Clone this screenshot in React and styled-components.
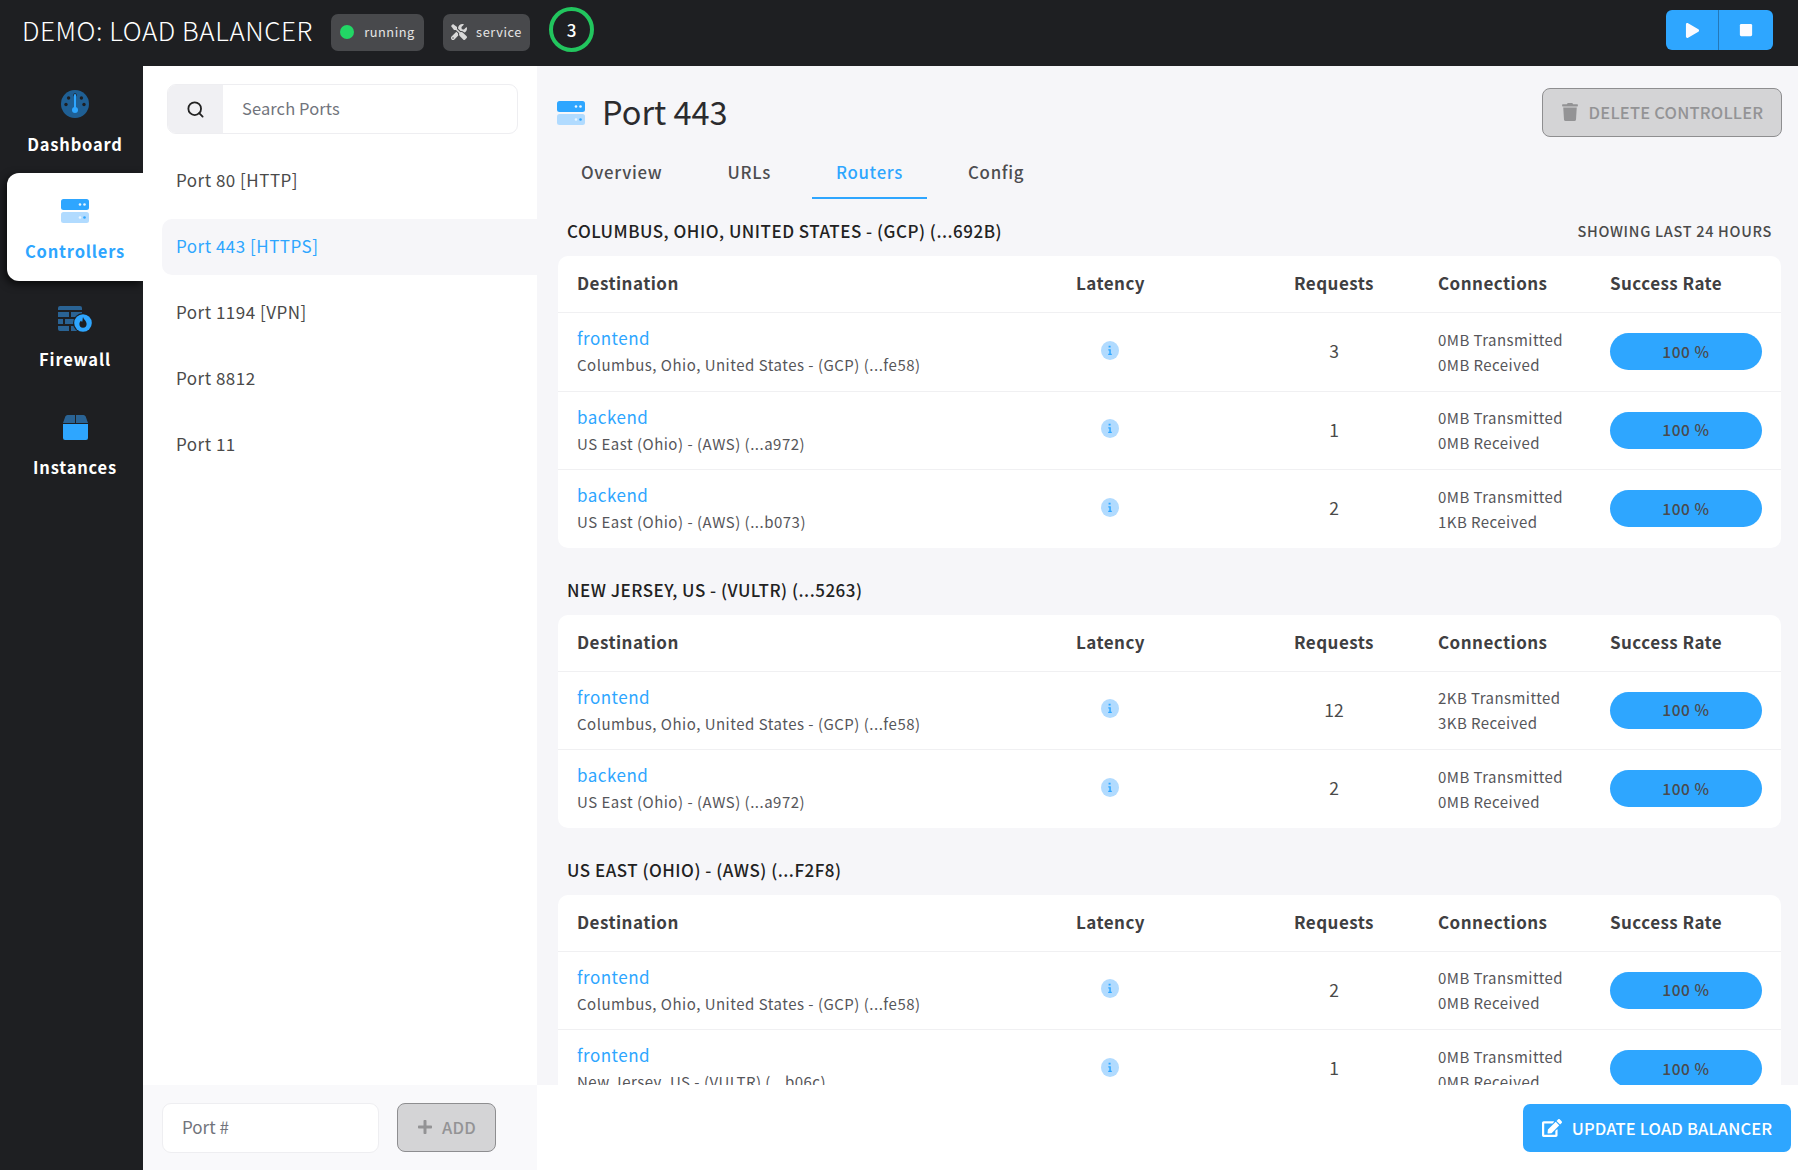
import React from "react";
import styled, { createGlobalStyle } from "styled-components";
import { FaEdit, FaPlay, FaPlus, FaStop, FaTools, FaTrash } from "react-icons/fa";
import { Search } from "lucide-react";

const BLUE = "#2ea6ff";
const DARK = "#1e1f22";

const GlobalStyle = createGlobalStyle`
  html, body, #root { margin: 0; height: 100%; }
  body {
    font-family: "Noto Sans CJK SC", "Noto Sans", sans-serif;
    color: #333;
    overflow: hidden;
  }
  * { box-sizing: border-box; }
`;

const ServerIcon = ({ size = 28 }) => (
  <svg width={size} height={(size * 24) / 28} viewBox="0 0 28 24">
    <rect x="0" y="0" width="28" height="11" rx="2.5" fill={BLUE} />
    <rect x="0" y="13" width="28" height="11" rx="2.5" fill="#b1dbff" />
    <circle cx="19" cy="5.5" r="1.3" fill="#eaf6ff" />
    <circle cx="23.5" cy="5.5" r="1.3" fill="#eaf6ff" />
    <circle cx="19" cy="18.5" r="1.3" fill="#eaf6ff" />
    <circle cx="23.5" cy="18.5" r="1.3" fill={BLUE} />
  </svg>
);

const DashboardIcon = () => (
  <svg width="28" height="28" viewBox="0 0 28 28">
    <circle cx="14" cy="14" r="14" fill="#1f5f94" />
    <circle cx="14" cy="5" r="1.7" fill={DARK} />
    <circle cx="7.6" cy="8" r="1.7" fill={DARK} />
    <circle cx="20.4" cy="8" r="1.7" fill={DARK} />
    <circle cx="5" cy="14.5" r="1.7" fill={DARK} />
    <circle cx="23" cy="14.5" r="1.7" fill={DARK} />
    <rect x="13" y="4" width="2" height="17" rx="1" fill={BLUE} />
    <circle cx="14" cy="20" r="3" fill={BLUE} />
  </svg>
);

const FirewallIcon = () => (
  <svg width="34" height="27" viewBox="0 0 34 27">
    <path
      d="M2 0h20a2 2 0 0 1 2 2v2H0V2a2 2 0 0 1 2-2ZM0 6h11v5H0ZM13 6h11v5H13ZM0 13h5v5H0ZM7 13h11v5H7ZM0 20h11v5H2a2 2 0 0 1-2-2ZM13 20h6v5h-6Z"
      fill="#2a6394"
    />
    <circle cx="25" cy="17" r="10" fill={DARK} />
    <circle cx="25" cy="17" r="8.800" fill={BLUE} />
    <path
      d="M25 11c.6 2.400 3.600 3.800 3.600 7.100a3.600 3.600 0 0 1-7.200 0c0-1.700.8-2.800 1.700-3.700.3 1 .8 1.300 1.100 1.300.6-1.400.3-3.300.8-4.700Z"
      fill={DARK}
    />
  </svg>
);

const BoxIcon = () => (
  <svg width="25" height="25" viewBox="0 0 25 25">
    <path d="M4.500 0H12v8H0l2.300-6.500A2.400 2.400 0 0 1 4.500 0ZM13 0h7.500a2.400 2.400 0 0 1 2.200 1.500L25 8H13Z" fill="#2a6394" />
    <path d="M0 9h25v14a2 2 0 0 1-2 2H2a2 2 0 0 1-2-2Z" fill={BLUE} />
  </svg>
);

const InfoIcon = () => (
  <svg width="18" height="19" viewBox="0 0 18 19">
    <ellipse cx="9" cy="9.500" rx="9" ry="9.500" fill="#b1dbff" />
    <path d="M7.600 4.800h2v1.800h-2ZM7.300 8.200h2.500v4.500h1v1.200H7.200v-1.200h1.100V9.400h-1Z" fill={BLUE} />
  </svg>
);

const NAV = [
  { label: "Dashboard", icon: <DashboardIcon /> },
  { label: "Controllers", icon: <ServerIcon />, active: true },
  { label: "Firewall", icon: <FirewallIcon /> },
  { label: "Instances", icon: <BoxIcon /> },
];

const PORTS = ["Port 80 [HTTP]", "Port 443 [HTTPS]", "Port 1194 [VPN]", "Port 8812", "Port 11"];
const TABS = ["Overview", "URLs", "Routers", "Config"];

const COLUMBUS = "Columbus, Ohio, United States - (GCP) (...fe58)";

const GROUPS = [
  {
    title: "COLUMBUS, OHIO, UNITED STATES - (GCP) (...692B)",
    note: "SHOWING LAST 24 HOURS",
    rows: [
      { name: "frontend", place: COLUMBUS, requests: 3, sent: "0MB", received: "0MB" },
      { name: "backend", place: "US East (Ohio) - (AWS) (...a972)", requests: 1, sent: "0MB", received: "0MB" },
      { name: "backend", place: "US East (Ohio) - (AWS) (...b073)", requests: 2, sent: "0MB", received: "1KB" },
    ],
  },
  {
    title: "NEW JERSEY, US - (VULTR) (...5263)",
    rows: [
      { name: "frontend", place: COLUMBUS, requests: 12, sent: "2KB", received: "3KB" },
      { name: "backend", place: "US East (Ohio) - (AWS) (...a972)", requests: 2, sent: "0MB", received: "0MB" },
    ],
  },
  {
    title: "US EAST (OHIO) - (AWS) (...F2F8)",
    rows: [
      { name: "frontend", place: COLUMBUS, requests: 2, sent: "0MB", received: "0MB" },
      { name: "frontend", place: "New Jersey, US - (VULTR) (...b06c)", requests: 1, sent: "0MB", received: "0MB" },
    ],
  },
];

export default function App() {
  return (
    <>
      <GlobalStyle />
      <Page>
        <Header>
          <Title>DEMO: LOAD BALANCER</Title>
          <Badge $width={93} $gap={10}>
            <StatusDot />
            running
          </Badge>
          <Badge $width={87} $gap={9}>
            <FaTools size={16} color="#d9d9d9" />
            service
          </Badge>
          <CountRing>3</CountRing>
          <PlayGroup>
            <PlayButton $width={52}><FaPlay size={15} /></PlayButton>
            <PlayButton $width={55}><FaStop size={14} /></PlayButton>
          </PlayGroup>
        </Header>

        <Body>
          <Sidebar>
            {NAV.map((item) => (
              <NavItem key={item.label} $active={item.active}>
                <NavIcon>{item.icon}</NavIcon>
                {item.label}
              </NavItem>
            ))}
          </Sidebar>

          <PortPanel>
            <SearchBox>
              <SearchAddon><Search size={19} strokeWidth={2.3} color="#222" /></SearchAddon>
              <SearchText>Search Ports</SearchText>
            </SearchBox>
            <PortList>
              {PORTS.map((port) => (
                <PortItem key={port} $active={port.includes("443")}>{port}</PortItem>
              ))}
            </PortList>
            <PortFooter>
              <PortInput>Port #</PortInput>
              <AddButton><FaPlus size={16} /> ADD</AddButton>
            </PortFooter>
          </PortPanel>

          <Main>
            <MainHead>
              <PageTitle>
                <ServerIcon />
                <span>Port 443</span>
              </PageTitle>
              <DeleteButton><FaTrash size={18} /> DELETE CONTROLLER</DeleteButton>
            </MainHead>
            <Tabs>
              {TABS.map((tab) => (
                <Tab key={tab} $active={tab === "Routers"}>{tab}</Tab>
              ))}
            </Tabs>
            <Content>
              {GROUPS.map((group) => (
                <Group key={group.title}>
                  <GroupHead>
                    <GroupTitle>{group.title}</GroupTitle>
                    {group.note && <GroupNote>{group.note}</GroupNote>}
                  </GroupHead>
                  <Card>
                    <HeadRow>
                      <span>Destination</span>
                      <span>Latency</span>
                      <Centered>Requests</Centered>
                      <span>Connections</span>
                      <span>Success Rate</span>
                    </HeadRow>
                    {group.rows.map((row) => (
                      <Row key={row.place + row.requests}>
                        <div>
                          <RowName>{row.name}</RowName>
                          <RowPlace>{row.place}</RowPlace>
                        </div>
                        <LatencyCell><InfoIcon /></LatencyCell>
                        <RequestCell>{row.requests}</RequestCell>
                        <Connections>
                          <div>{row.sent} Transmitted</div>
                          <div>{row.received} Received</div>
                        </Connections>
                        <RatePill>100 %</RatePill>
                      </Row>
                    ))}
                  </Card>
                </Group>
              ))}
            </Content>
            <MainFooter>
              <UpdateButton><FaEdit size={20} /> UPDATE LOAD BALANCER</UpdateButton>
            </MainFooter>
          </Main>
        </Body>
      </Page>
    </>
  );
}

const Page = styled.div`
  width: 100%;
  height: 100vh;
  display: flex;
  flex-direction: column;
  background: ${DARK};
`;

const Header = styled.header`
  height: 66px;
  flex: none;
  display: flex;
  align-items: center;
  padding: 0 25px 1px 22px;
  color: #fff;
`;

const Title = styled.h1`
  margin: -6px 19px 0 0;
  width: 290px;
  font-size: 26px;
  line-height: 30px;
  font-weight: 300;
  letter-spacing: 0.55px;
  white-space: nowrap;
`;

const Badge = styled.div`
  width: ${({ $width }) => $width}px;
  height: 37px;
  margin-right: 19px;
  padding-bottom: 2px;
  border-radius: 7px;
  background: #48494c;
  color: #e6e6e6;
  display: flex;
  align-items: center;
  justify-content: center;
  gap: ${({ $gap }) => $gap}px;
  font-size: 12.800px;
  letter-spacing: 0.55px;
  font-weight: 400;
`;

const StatusDot = styled.span`
  width: 14px;
  height: 14px;
  border-radius: 50%;
  background: #22d665;
`;

const CountRing = styled.div`
  width: 45px;
  height: 45px;
  margin-top: -6px;
  border: 4px solid #22c55e;
  border-radius: 50%;
  display: flex;
  align-items: center;
  justify-content: center;
  font-size: 17px;
  font-weight: 500;
`;

const PlayGroup = styled.div`
  margin-left: auto;
  margin-top: -5px;
  height: 40px;
  display: flex;
  border-radius: 6px;
  overflow: hidden;
`;

const PlayButton = styled.div`
  width: ${({ $width }) => $width}px;
  background: ${BLUE};
  color: #fbfbff;
  display: flex;
  align-items: center;
  justify-content: center;
  & + & {
    border-left: 1px solid #2478b8;
  }
`;

const Body = styled.div`
  flex: 1;
  min-height: 0;
  display: flex;
`;

const Sidebar = styled.nav`
  width: 143px;
  flex: none;
`;

const NavItem = styled.div`
  height: 108px;
  margin-left: 7px;
  display: flex;
  flex-direction: column;
  align-items: center;
  font-size: 16.500px;
  line-height: 24px;
  font-weight: 700;
  letter-spacing: 0.8px;
  color: ${({ $active }) => ($active ? BLUE : "#fff")};
  background: ${({ $active }) => ($active ? "#fff" : "transparent")};
  ${({ $active }) => $active && `
    border-radius: 12px 0 0 12px;
    box-shadow: -2px 3px 8px rgba(0, 0, 0, 0.7);
  `}
  &:first-child {
    height: 107px;
  }
`;

const NavIcon = styled.div`
  height: 66px;
  padding-top: 10px;
  display: flex;
  align-items: center;
  justify-content: center;
`;

const PortPanel = styled.aside`
  width: 394px;
  flex: none;
  position: relative;
  z-index: 1;
  background: #fff;
  display: flex;
  flex-direction: column;
`;

const SearchBox = styled.div`
  margin: 18px 19px 0 24px;
  height: 50px;
  flex: none;
  display: flex;
  border: 1px solid #eeeef1;
  border-radius: 9px;
  overflow: hidden;
`;

const SearchAddon = styled.div`
  width: 55px;
  background: #f0f0f3;
  display: flex;
  align-items: center;
  justify-content: center;
`;

const SearchText = styled.div`
  padding: 0 0 2px 19px;
  display: flex;
  align-items: center;
  font-size: 16.500px;
  letter-spacing: 0.1px;
  color: #71747c;
`;

const PortList = styled.div`
  flex: 1;
  padding: 19px 0 0 19px;
  display: flex;
  flex-direction: column;
  gap: 10px;
`;

const PortItem = styled.div`
  height: 56px;
  padding: 0 0 3px 14px;
  display: flex;
  align-items: center;
  font-size: 17px;
  letter-spacing: 0.5px;
  color: ${({ $active }) => ($active ? BLUE : "#4a4a4a")};
  background: ${({ $active }) => ($active ? "#f6f6f9" : "transparent")};
  border-radius: 10px 0 0 10px;
`;

const PortFooter = styled.div`
  height: 85px;
  flex: none;
  background: #f9f9fb;
  padding: 0 41px 0 19px;
  display: flex;
  align-items: center;
  justify-content: space-between;
`;

const PortInput = styled.div`
  width: 217px;
  height: 50px;
  padding: 0 0 2px 19px;
  display: flex;
  align-items: center;
  background: #fff;
  border: 1px solid #eeeef1;
  border-radius: 9px;
  font-size: 17px;
  color: #71747c;
`;

const DisabledButton = styled.div`
  height: 49px;
  padding-bottom: 2px;
  display: flex;
  align-items: center;
  justify-content: center;
  background: #d4d4d6;
  border: 1px solid #8e8e90;
  border-radius: 8px;
  color: #939395;
  font-weight: 500;
  font-size: 16.500px;
`;

const AddButton = styled(DisabledButton)`
  width: 99px;
  gap: 9px;
  letter-spacing: 0.3px;
`;

const Main = styled.main`
  flex: 1;
  min-width: 0;
  display: flex;
  flex-direction: column;
  background: #f6f6f9;
`;

const MainHead = styled.div`
  flex: none;
  padding: 22px 16px 0 20px;
  display: flex;
  justify-content: space-between;
`;

const PageTitle = styled.div`
  display: flex;
  align-items: center;
  gap: 17px;
  height: 49px;
  font-size: 32.500px;
  font-weight: 400;
  color: #2b2b2e;
  span {
    margin-top: -4px;
  }
`;

const DeleteButton = styled(DisabledButton)`
  width: 240px;
  gap: 10px;
  letter-spacing: 0.2px;
`;

const Tabs = styled.div`
  flex: none;
  margin-top: 11px;
  padding-left: 20px;
  display: flex;
  gap: 17px;
`;

const Tab = styled.div`
  height: 51px;
  padding: 0 24px 2px;
  display: flex;
  align-items: center;
  font-size: 16.800px;
  font-weight: 500;
  letter-spacing: 0.7px;
  color: ${({ $active }) => ($active ? BLUE : "#4d4d50")};
  border-bottom: 2px solid ${({ $active }) => ($active ? BLUE : "transparent")};
`;

const Content = styled.div`
  flex: 1;
  min-height: 0;
  overflow: hidden;
  padding: 21px 17px 0 21px;
  display: flex;
  flex-direction: column;
  gap: 31px;
`;

const Group = styled.section`
  flex: none;
`;

const GroupHead = styled.div`
  height: 24px;
  margin-bottom: 12px;
  padding: 0 9px 2px;
  display: flex;
  align-items: center;
  justify-content: space-between;
`;

const GroupTitle = styled.h2`
  margin: 0;
  font-size: 17px;
  line-height: 24px;
  font-weight: 500;
  letter-spacing: 0.5px;
  color: #222;
`;

const GroupNote = styled.span`
  margin-top: -2px;
  font-size: 14.500px;
  font-weight: 500;
  letter-spacing: 0.7px;
  color: #4a4a4a;
`;

const Card = styled.div`
  background: #fff;
  border-radius: 10px;
  overflow: hidden;
`;

const HeadRow = styled.div`
  height: 56px;
  padding: 0 19px 3px;
  display: grid;
  grid-template-columns: 499px 154px 208px 172px 152px;
  align-items: center;
  font-size: 17px;
  font-weight: 700;
  letter-spacing: 0.45px;
  color: #3f3f42;
`;

const Centered = styled.span`
  text-align: center;
`;

const Row = styled.div`
  height: 78.500px;
  padding: 0 19px;
  display: grid;
  grid-template-columns: 499px 154px 208px 172px 152px;
  align-items: center;
  border-top: 1px solid #f0f0f2;
`;

const RowName = styled.div`
  font-size: 17px;
  line-height: 24px;
  letter-spacing: 0.5px;
  color: ${BLUE};
`;

const RowPlace = styled.div`
  margin-top: 3px;
  font-size: 15px;
  line-height: 24px;
  letter-spacing: 0.5px;
  color: #56565a;
`;

const LatencyCell = styled.div`
  width: 68px;
  padding-bottom: 3px;
  display: flex;
  justify-content: center;
`;

const RequestCell = styled.div`
  padding-bottom: 2px;
  text-align: center;
  font-size: 17.500px;
  color: #4a4a4a;
`;

const Connections = styled.div`
  font-size: 15px;
  line-height: 25px;
  letter-spacing: 0.45px;
  color: #56565a;
`;

const RatePill = styled.div`
  width: 152px;
  height: 37px;
  padding-bottom: 2px;
  border-radius: 19px;
  background: ${BLUE};
  display: flex;
  align-items: center;
  justify-content: center;
  font-size: 15.500px;
  font-weight: 500;
  letter-spacing: 0.6px;
  color: #4a4a4d;
`;

const MainFooter = styled.div`
  height: 85px;
  flex: none;
  background: #fff;
  position: relative;
  padding-right: 7px;
  display: flex;
  align-items: center;
  justify-content: flex-end;
`;

const UpdateButton = styled.div`
  width: 268px;
  height: 48px;
  border-radius: 7px;
  background: ${BLUE};
  color: #fff;
  display: flex;
  align-items: center;
  justify-content: center;
  gap: 10px;
  font-size: 16.500px;
  font-weight: 500;
  letter-spacing: 0.15px;
`;
